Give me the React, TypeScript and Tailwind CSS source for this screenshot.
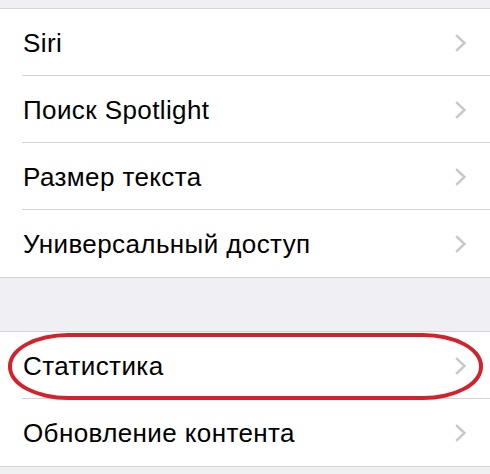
import React from 'react';

const Chevron = () => (
  <svg width="12" height="18" viewBox="0 0 12 18" fill="none" className="shrink-0">
    <path d="M2 2l7.5 7-7.5 7" stroke="#c7c7cc" strokeWidth="2.4" strokeLinecap="square" />
  </svg>
);

const Row = ({ label, last }: { label: string; last?: boolean }) => (
  <div className="relative h-[67px] pl-[23px] pr-[23px] flex items-center justify-between">
    <span className="text-[26px] tracking-[0.4px] text-black leading-none">{label}</span>
    <Chevron />
    {!last && <div className="absolute left-[22px] right-0 bottom-0 h-px bg-[#d4d4d8]" />}
  </div>
);

const App = () => {
  const first = ['Siri', 'Поиск Spotlight', 'Размер текста', 'Универсальный доступ'];

  return (
    <div
      className="w-[490px] h-[474px] overflow-hidden bg-[#efeff4]"
      style={{ fontFamily: '"Liberation Sans", Arial, sans-serif' }}
    >
      <div className="h-[8px]" />
      <div className="bg-white border-y border-[#d4d4d8]">
        {first.map((t, i) => (
          <Row key={t} label={t} last={i === first.length - 1} />
        ))}
      </div>
      <div className="h-[53px]" />
      <div className="relative bg-white border-y border-[#d4d4d8]">
        <Row label="Статистика" />
        <Row label="Обновление контента" last />
        {/* красный овал поверх строки */}
        <div className="absolute left-[8px] top-[1px] w-[475px] h-[67px] rounded-[60px/33px] border-[4px] border-[#d3222c] pointer-events-none" />
      </div>
    </div>
  );
};

export default App;
